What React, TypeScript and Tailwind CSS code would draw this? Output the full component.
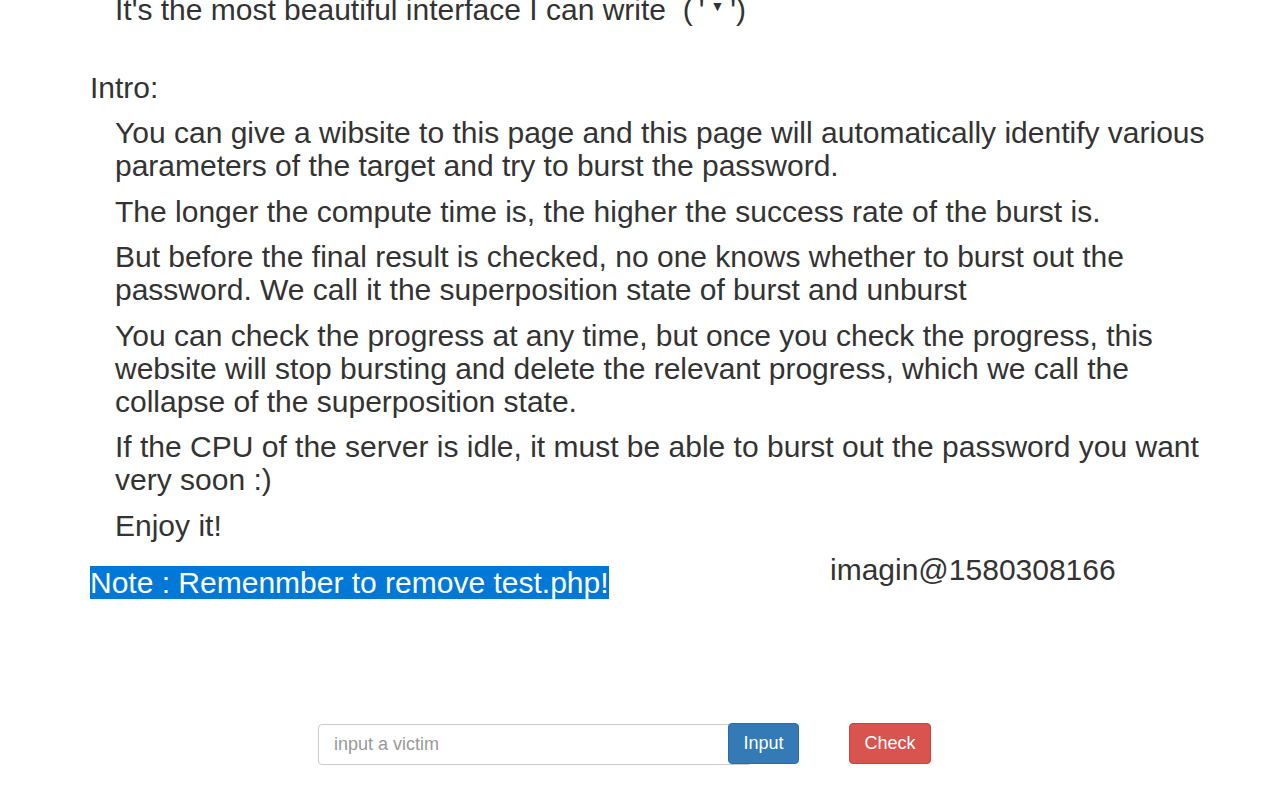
export default function App() {
  const paras = [
    "You can give a wibsite to this page and this page will automatically identify various parameters of the target and try to burst the password.",
    "The longer the compute time is, the higher the success rate of the burst is.",
    "But before the final result is checked, no one knows whether to burst out the password. We call it the superposition state of burst and unburst",
    "You can check the progress at any time, but once you check the progress, this website will stop bursting and delete the relevant progress, which we call the collapse of the superposition state.",
    "If the CPU of the server is idle, it must be able to burst out the password you want very soon :)",
    "Enjoy it!",
  ];

  return (
    <div className="min-h-[807px] w-[1265px] overflow-hidden bg-white text-[#333] font-['Liberation_Sans',Arial,sans-serif]">
      <div className="pl-[90px] pr-[40px] -mt-[7px] text-[30px] leading-[33px]">
        <p className="pl-[25px]">
          It's the most beautiful interface I can write&nbsp;&nbsp;(&thinsp;'&thinsp;<span className="text-[14px] leading-none align-[9px]">▼</span>&thinsp;')
        </p>

        <p className="mt-[45px]">Intro:</p>

        <div className="mt-[12px] flex flex-col gap-[12.5px] pl-[25px]">
          {paras.map((t) => (
            <p key={t}>{t}</p>
          ))}
        </div>

        <div className="mt-[11px] flex">
          <div className="w-[740px] pt-[13px]">
            <span className="bg-[#0078d7] text-white">Note : Remenmber to remove test.php!</span>
          </div>
          <div>imagin@1580308166</div>
        </div>
      </div>

      <div className="mt-[124px] flex items-start pl-[318px]">
        <input
          className="mt-px h-[41px] w-[434px] rounded-[4px] border border-[#ccc] px-[15px] text-[18px] text-[#555] placeholder:text-[#999] outline-none"
          placeholder="input a victim"
        />
        <button className="-ml-[24px] h-[41px] w-[71px] rounded-[4px] border border-[#2e6da4] bg-[#337ab7] text-[18px] text-white">
          Input
        </button>
        <button className="ml-[50px] h-[41px] w-[82px] rounded-[4px] border border-[#d43f3a] bg-[#d9534f] text-[18px] text-white">
          Check
        </button>
      </div>
    </div>
  );
}
